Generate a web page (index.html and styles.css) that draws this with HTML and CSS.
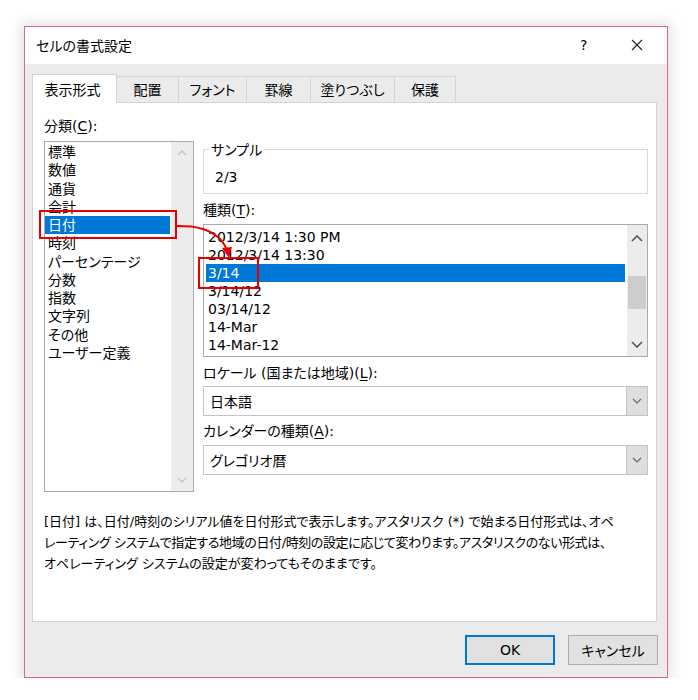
FILE: index.html
```html
<!DOCTYPE html>
<html lang="ja">
<head>
<meta charset="utf-8">
<title>セルの書式設定</title>
<link rel="stylesheet" href="styles.css">
</head>
<body>
<div class="page">
  <div class="dialog">
    <div class="titlebar">
      <span class="title">セルの書式設定</span>
      <span class="help">?</span>
      <span class="close"><svg width="12" height="12" viewBox="0 0 12 12"><path d="M1 1 L11 11 M11 1 L1 11" stroke="#222" stroke-width="1.1" fill="none"/></svg></span>
    </div>
    <div class="tabs">
      <div class="tab active t1">表示形式</div>
      <div class="tab t2">配置</div>
      <div class="tab t3">フォント</div>
      <div class="tab t4">罫線</div>
      <div class="tab t5">塗りつぶし</div>
      <div class="tab t6">保護</div>
    </div>
    <div class="panel">
      <div class="cols">
        <div class="left">
          <div class="label lbl-cat">分類(<u>C</u>):</div>
          <div class="listbox cat">
            <ul class="items">
              <li>標準</li>
              <li>数値</li>
              <li>通貨</li>
              <li>会計</li>
              <li class="sel">日付</li>
              <li>時刻</li>
              <li>パーセンテージ</li>
              <li>分数</li>
              <li>指数</li>
              <li>文字列</li>
              <li>その他</li>
              <li>ユーザー定義</li>
            </ul>
            <div class="vscroll">
              <svg class="chev" width="10" height="6" viewBox="0 0 10 6"><polyline points="1,5 5,1 9,5" fill="none" stroke="#c4c4c4" stroke-width="1.3"/></svg>
              <svg class="chev" width="10" height="6" viewBox="0 0 10 6"><polyline points="1,1 5,5 9,1" fill="none" stroke="#c4c4c4" stroke-width="1.3"/></svg>
            </div>
          </div>
        </div>
        <div class="right">
          <fieldset class="sample">
            <legend>サンプル</legend>
            <div class="sample-val">2/3</div>
          </fieldset>
          <div class="label lbl-type">種類(<u>T</u>):</div>
          <div class="listbox types">
            <ul class="items">
              <li>2012/3/14 1:30 PM</li>
              <li>2012/3/14 13:30</li>
              <li class="sel">3/14</li>
              <li>3/14/12</li>
              <li>03/14/12</li>
              <li>14-Mar</li>
              <li>14-Mar-12</li>
            </ul>
            <div class="vscroll dark">
              <svg class="chev" width="12" height="7" viewBox="0 0 12 7"><polyline points="1,6 6,1 11,6" fill="none" stroke="#555" stroke-width="1.6"/></svg>
              <div class="thumb"></div>
              <svg class="chev" width="12" height="7" viewBox="0 0 12 7"><polyline points="1,1 6,6 11,1" fill="none" stroke="#555" stroke-width="1.6"/></svg>
            </div>
          </div>
          <div class="label lbl-locale">ロケール (国または地域)(<u>L</u>):</div>
          <div class="combo">
            <span class="combo-text">日本語</span>
            <span class="drop"><svg width="10" height="6" viewBox="0 0 10 6"><polyline points="1,1 5,5 9,1" fill="none" stroke="#666" stroke-width="1.2"/></svg></span>
          </div>
          <div class="label lbl-cal">カレンダーの種類(<u>A</u>):</div>
          <div class="combo">
            <span class="combo-text">グレゴリオ暦</span>
            <span class="drop"><svg width="10" height="6" viewBox="0 0 10 6"><polyline points="1,1 5,5 9,1" fill="none" stroke="#666" stroke-width="1.2"/></svg></span>
          </div>
        </div>
      </div>
      <div class="desc">
        <div class="line">[日付] は、日付/時刻のシリアル値を日付形式で表示します。アスタリスク (*) で始まる日付形式は、オペ</div>
        <div class="line l2">レーティング システムで指定する地域の日付/時刻の設定に応じて変わります。アスタリスクのない形式は、</div>
        <div class="line">オペレーティング システムの設定が変わってもそのままです。</div>
      </div>
    </div>
    <div class="buttons">
      <div class="btn ok">OK</div>
      <div class="btn">キャンセル</div>
    </div>

    <div class="mark mark1"></div>
    <div class="mark mark2"></div>
    <svg class="arrow" width="698" height="700" viewBox="0 0 698 700">
      <path d="M177 226 L191 226.5 Q219 230 227 250" fill="none" stroke="#e80000" stroke-width="2"/>
      <polygon points="222,248 232,247 229,258" fill="#e80000"/>
    </svg>
  </div>
</div>
</body>
</html>
```

FILE: styles.css
```css
* { box-sizing: border-box; }

body {
  margin: 0;
  background: #ffffff;
  font-family: "DejaVu Sans", "Noto Sans CJK JP", sans-serif;
  font-size: 14px;
  color: #000;
  font-feature-settings: "palt";
}

.page {
  padding: 26px 0 0 24px;
}

.dialog {
  position: relative;
  width: 644px;
  height: 652px;
  border: 1px solid #d5679c;
  background: #ebebeb;
  box-shadow: 0 0 12px 3px rgba(0, 0, 0, 0.12);
  display: flex;
  flex-direction: column;
}

.titlebar {
  height: 37px;
  background: #fff;
  display: flex;
  align-items: center;
  padding: 0 0 2px 11px;
}

.title {
  flex: 1;
  font-family: "Noto Sans CJK JP", sans-serif;
  font-size: 14px;
}

.help {
  width: 20px;
  font-family: "DejaVu Sans", sans-serif;
  font-size: 14px;
  margin-right: 31px;
}

.close {
  width: 12px;
  height: 12px;
  margin-right: 24px;
  display: flex;
}

.tabs {
  display: flex;
  align-items: flex-end;
  height: 28px;
  margin: 10px 0 0 7px;
}

.tab {
  height: 26px;
  border: 1px solid #d4d4d4;
  border-bottom: none;
  margin-left: -1px;
  display: flex;
  align-items: center;
  justify-content: center;
  background: #ebebeb;
  font-family: "Noto Sans CJK JP", sans-serif;
  font-size: 14px;
  padding-bottom: 1px;
}

.tab.active {
  height: 29px;
  background: #fff;
  margin-left: 0;
  margin-bottom: -1px;
  position: relative;
  z-index: 1;
  padding-right: 4px;
}

.t1 { width: 85px; }
.t2 { width: 63px; }
.t3 { width: 69px; }
.t4 { width: 65px; }
.t5 { width: 85px; }
.t6 { width: 62px; }

.panel {
  margin: 0 10px 0 7px;
  height: 520px;
  background: #fff;
  border: 1px solid #d4d4d4;
}

.cols {
  display: flex;
  padding: 14px 0 0 11px;
}

.left {
  width: 150px;
}

.label {
  height: 18px;
  line-height: 18px;
  white-space: nowrap;
}

.label u {
  text-decoration-thickness: 1px;
  text-underline-offset: 2px;
}

.lbl-cat { margin-bottom: 6px; }

.listbox {
  border: 1px solid #a9abb2;
  display: flex;
  background: #fff;
}

.items {
  list-style: none;
  margin: 0;
  padding: 0;
  flex: 1;
}

.items li {
  white-space: nowrap;
}

.items li.sel {
  background: #0078d7;
  color: #fff;
}

.cat {
  height: 351px;
}

.cat .items {
  padding-top: 1px;
  margin-right: 1px;
}

.cat .items li {
  line-height: 18.25px;
  height: 18.25px;
  padding-left: 3px;
}

.vscroll {
  background: #ececec;
  display: flex;
  flex-direction: column;
  align-items: center;
  justify-content: space-between;
}

.cat .vscroll {
  width: 22px;
  padding: 8px 0 8px 0;
}

.right {
  width: 445px;
  margin-left: 9px;
  padding-top: 23px;
}

.sample {
  margin: 0;
  border: 1px solid #d8d8d8;
  padding: 10px 6px 7px 11px;
  min-width: 0;
}

.sample legend {
  padding: 0 2px;
  margin-left: -6px;
  line-height: 18px;
  font-family: "Noto Sans CJK JP", sans-serif;
}

.sample-val {
  line-height: 18px;
  height: 18px;
}

.lbl-type {
  margin-top: 7px;
  margin-bottom: 5px;
}

.types {
  height: 133px;
}

.types .items {
  padding: 3px 0 0 2px;
  margin-right: 2px;
}

.types .items li {
  line-height: 18px;
  height: 18px;
  padding-left: 2px;
}

.types .vscroll {
  width: 20px;
  padding: 10px 0 8px 0;
  position: relative;
}

.thumb {
  position: absolute;
  left: 1px;
  right: 1px;
  top: 51px;
  height: 33px;
  background: #cdcdcd;
}

.lbl-locale {
  margin-top: 7px;
  margin-bottom: 4px;
}

.lbl-cal {
  margin-top: 6px;
  margin-bottom: 5px;
}

.combo {
  height: 30px;
  border: 1px solid #c4c4c4;
  display: flex;
  align-items: stretch;
}

.combo-text {
  flex: 1;
  padding-left: 6px;
  display: flex;
  align-items: center;
  font-family: "Noto Sans CJK JP", sans-serif;
}

.drop {
  width: 21px;
  background: #dedede;
  border-left: 1px solid #c4c4c4;
  display: flex;
  align-items: center;
  justify-content: center;
}

.desc {
  margin-top: 19px;
  padding-left: 11px;
  font-size: 13px;
  line-height: 21px;
}

.desc .line {
  white-space: nowrap;
  height: 21px;
}

.desc .l2 {
  letter-spacing: -0.4px;
}

.buttons {
  display: flex;
  justify-content: flex-end;
  gap: 13px;
  margin-top: 13px;
  padding-right: 9px;
}

.btn {
  width: 90px;
  height: 30px;
  background: #e1e1e1;
  border: 1px solid #adadad;
  display: flex;
  align-items: center;
  justify-content: center;
  font-family: "DejaVu Sans", "Noto Sans CJK JP", sans-serif;
  font-size: 14px;
}

.btn.ok {
  border: 2px solid #0078d7;
}

.mark {
  position: absolute;
  border: 2px solid #e80000;
  z-index: 3;
}

.mark1 {
  left: 14px;
  top: 183px;
  width: 138px;
  height: 29px;
}

.mark2 {
  left: 173px;
  top: 230px;
  width: 61px;
  height: 32px;
}

.arrow {
  position: absolute;
  left: -25px;
  top: -27px;
  z-index: 3;
  pointer-events: none;
}
```
